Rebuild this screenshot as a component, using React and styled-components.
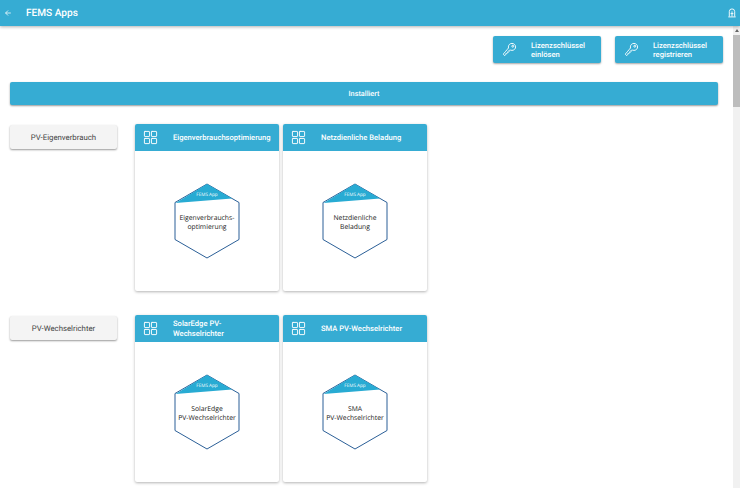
import styled, { createGlobalStyle } from "styled-components";
import { IoArrowBack, IoGridOutline, IoKeyOutline } from "react-icons/io5";

const GlobalStyle = createGlobalStyle`
  html, body {
    margin: 0;
    height: 100%;
    overflow: hidden;
    background: #fff;
    font-family: Roboto, "Liberation Sans", sans-serif;
    text-rendering: geometricPrecision;
  }
  * {
    box-sizing: border-box;
  }
  button {
    text-rendering: geometricPrecision;
  }
`;

const BLUE = "#36acd3";

const Page = styled.div`
  display: flex;
  flex-direction: column;
  height: 100vh;
`;

const Toolbar = styled.header`
  position: relative;
  z-index: 2;
  flex: none;
  display: flex;
  align-items: center;
  height: 26px;
  padding: 0 4px;
  background: ${BLUE};
  color: #fff;
  box-shadow: 0 1px 3px rgba(0, 0, 0, 0.3);
`;

const BackIcon = styled(IoArrowBack)`
  width: 8px;
  height: 8px;
`;

const ToolbarTitle = styled.h1`
  flex: 1;
  margin: 0 0 0 14px;
  font-size: 10.1px;
  font-weight: 500;
`;

const Main = styled.div`
  flex: 1;
  display: flex;
  min-height: 0;
`;

const Scroller = styled.main`
  flex: 1;
  overflow: hidden;
`;

const ScrollTrack = styled.div`
  flex: none;
  display: flex;
  flex-direction: column;
  align-items: stretch;
  width: 7px;
  background: #f1f1f1;
`;

const ScrollArrow = styled.div`
  flex: none;
  display: flex;
  align-items: center;
  justify-content: center;
  height: 9px;
  &::before {
    content: "";
    border-left: 2.5px solid transparent;
    border-right: 2.5px solid transparent;
    border-bottom: 3px solid #666;
  }
`;

const ScrollThumb = styled.div`
  flex: none;
  height: 72px;
  background: #bdbdbd;
`;

const Content = styled.div`
  padding: 10px 10px 0 10px;
`;

const LicenseRow = styled.div`
  display: flex;
  justify-content: flex-end;
  gap: 14px;
`;

const LicenseButton = styled.button`
  display: flex;
  align-items: center;
  gap: 14px;
  width: 108px;
  height: 27px;
  padding: 0 0 0 9px;
  border: 0;
  border-radius: 2px;
  background: ${BLUE};
  color: #fff;
  font: 500 7.6px/9px Roboto, "Liberation Sans", sans-serif;
  text-align: left;
  box-shadow: 0 1px 2px rgba(0, 0, 0, 0.35);
`;

const KeyIcon = styled(IoKeyOutline)`
  flex: none;
  width: 15px;
  height: 15px;
`;

const InstalledBar = styled.button`
  display: block;
  width: 708px;
  height: 23px;
  margin-top: 19px;
  border: 0;
  border-radius: 2px;
  background: ${BLUE};
  color: #fff;
  font: 500 7.3px Roboto, "Liberation Sans", sans-serif;
  box-shadow: 0 1px 2px rgba(0, 0, 0, 0.4);
`;

const CategoryRow = styled.section`
  display: flex;
  align-items: flex-start;
  margin-top: 19px;
  margin-bottom: 24px;
  & + & {
    margin-top: 0;
  }
`;

const CategoryButton = styled.button`
  flex: none;
  width: 107px;
  height: 24px;
  margin-top: 1px;
  margin-right: 18px;
  border: 0;
  border-radius: 2px;
  background: #f4f4f4;
  color: #444;
  font: 400 7.8px Roboto, "Liberation Sans", sans-serif;
  box-shadow: 0 1px 2px rgba(0, 0, 0, 0.4);
`;

const Cards = styled.div`
  display: flex;
  gap: 4px;
`;

const Card = styled.article`
  width: 144px;
  height: 167px;
  border-radius: 2px;
  background: #fff;
  overflow: hidden;
  box-shadow: 0 1px 3px rgba(0, 0, 0, 0.3);
`;

const CardHeader = styled.div`
  display: flex;
  align-items: center;
  gap: 15px;
  height: 27px;
  padding: 0 6px 0 8px;
  background: ${BLUE};
  color: #fff;
  font-size: 7.6px;
  font-weight: 500;
  line-height: 10px;
`;

const GridIcon = styled(IoGridOutline)`
  flex: none;
  width: 15px;
  height: 15px;
`;

const CardTitle = styled.span`
  max-width: 97px;
`;

const CardBody = styled.div`
  display: flex;
  align-items: center;
  justify-content: center;
  height: 140px;
`;

const LabelLine = styled.text`
  font-family: "Open Sans", "Noto Sans", sans-serif;
  font-size: 6.8px;
  fill: #222;
  text-anchor: middle;
`;

const BadgeText = styled.text`
  font-family: "Open Sans", "Noto Sans", sans-serif;
  font-size: 4.6px;
  fill: #fff;
  text-anchor: middle;
`;

// the FEMS App hexagon logo, one label per line
function AppHexagon({ lines }) {
  return (
    <svg width="66" height="76" viewBox="0 0 66 76">
      <path d="M33 1L65 19.5V56.5L33 75L1 56.5V19.5Z" fill="#fff" stroke="#2b5f97" strokeWidth="1" />
      <path d="M33 1L58 15.5L1.5 20Z" fill="#28abd3" />
      <path d="M33 1L65 19.5L58 15.5Z" fill="#28abd3" />
      <BadgeText x="33" y="13">FEMS App</BadgeText>
      <LabelLine x="33" y="37">{lines[0]}</LabelLine>
      <LabelLine x="33" y="46">{lines[1]}</LabelLine>
    </svg>
  );
}

const sections = [
  {
    name: "PV-Eigenverbrauch",
    apps: [
      { title: "Eigenverbrauchsoptimierung", lines: ["Eigenverbrauchs-", "optimierung"] },
      { title: "Netzdienliche Beladung", lines: ["Netzdienliche", "Beladung"] },
    ],
  },
  {
    name: "PV-Wechselrichter",
    apps: [
      { title: "SolarEdge PV-Wechselrichter", lines: ["SolarEdge", "PV-Wechselrichter"] },
      { title: "SMA PV-Wechselrichter", lines: ["SMA", "PV-Wechselrichter"] },
    ],
  },
];

function StatusIcon() {
  return (
    <svg width="8" height="10" viewBox="0 0 8 10" fill="none" stroke="#fff" strokeWidth="0.9">
      <path d="M1.3 8.5V3.6a2.7 2.7 0 0 1 5.4 0v4.9" />
      <path d="M0.3 8.9H7.7M4 3.4V8.5M2.6 5.6H5.4" />
    </svg>
  );
}

export default function App() {
  return (
    <Page>
      <GlobalStyle />
      <Toolbar>
        <BackIcon />
        <ToolbarTitle>FEMS Apps</ToolbarTitle>
        <StatusIcon />
      </Toolbar>
      <Main>
        <Scroller>
          <Content>
            <LicenseRow>
              <LicenseButton>
                <KeyIcon />
                <span>Lizenzschlüssel<br />einlösen</span>
              </LicenseButton>
              <LicenseButton>
                <KeyIcon />
                <span>Lizenzschlüssel<br />registrieren</span>
              </LicenseButton>
            </LicenseRow>
            <InstalledBar>Installiert</InstalledBar>
            {sections.map((section) => (
              <CategoryRow key={section.name}>
                <CategoryButton>{section.name}</CategoryButton>
                <Cards>
                  {section.apps.map((app) => (
                    <Card key={app.title}>
                      <CardHeader>
                        <GridIcon />
                        <CardTitle>{app.title}</CardTitle>
                      </CardHeader>
                      <CardBody>
                        <AppHexagon lines={app.lines} />
                      </CardBody>
                    </Card>
                  ))}
                </Cards>
              </CategoryRow>
            ))}
          </Content>
        </Scroller>
        <ScrollTrack>
          <ScrollArrow />
          <ScrollThumb />
        </ScrollTrack>
      </Main>
    </Page>
  );
}
